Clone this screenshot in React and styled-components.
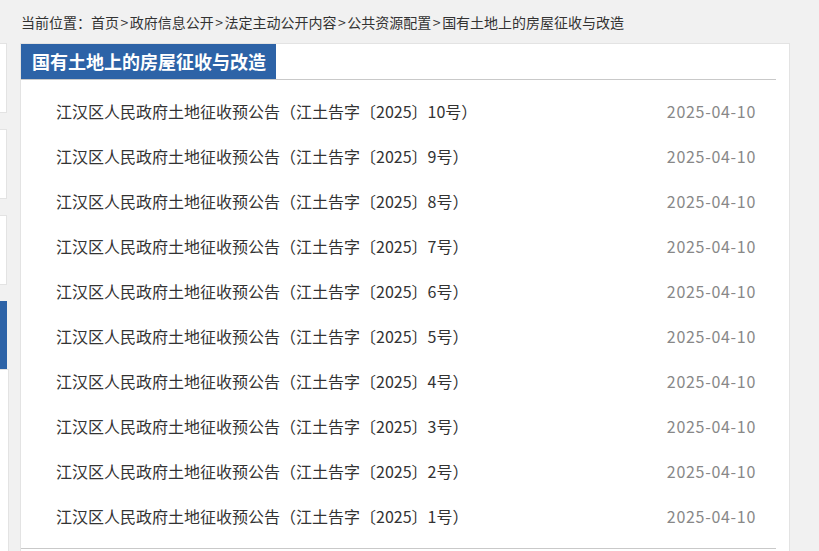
import React from 'react'
import styled, { createGlobalStyle } from 'styled-components'

const GlobalStyle = createGlobalStyle`
  html, body {
    margin: 0;
    padding: 0;
    background: #f1f1f1;
    font-family: "Microsoft YaHei", "Noto Sans CJK SC", "Noto Sans", sans-serif;
    overflow: hidden;
  }
`

const crumbs = ['首页', '政府信息公开', '法定主动公开内容', '公共资源配置', '国有土地上的房屋征收与改造']

const items = [10, 9, 8, 7, 6, 5, 4, 3, 2, 1].map(n => ({
    title: `江汉区人民政府土地征收预公告（江土告字〔2025〕${n}号）`,
    date: '2025-04-10',
}))

const sideItems = [false, false, false, true]

export default function App() {
    return (
        <Page>
            <GlobalStyle />
            <Crumb>
                当前位置：
                {crumbs.map((c, i) => (
                    <React.Fragment key={i}>
                        {i > 0 && <Sep>&gt;</Sep>}
                        {c}
                    </React.Fragment>
                ))}
            </Crumb>
            <Main>
                <Side>
                    {sideItems.map((on, i) => <SideItem key={i} $active={on} />)}
                    <SubMenu />
                </Side>
                <Panel>
                    <Head>
                        <HeadTitle>国有土地上的房屋征收与改造</HeadTitle>
                    </Head>
                    <List>
                        {items.map((it, i) => (
                            <Row key={i}>
                                <Title>{it.title}</Title>
                                <Date>{it.date}</Date>
                            </Row>
                        ))}
                    </List>
                </Panel>
            </Main>
        </Page>
    )
}

const Page = styled.div`
    width: 819px;
    height: 551px;
    overflow: hidden;
`

const Crumb = styled.div`
    height: 43px;
    line-height: 45px;
    padding-left: 21px;
    font-size: 14px;
    color: #333;
    white-space: nowrap;
`

const Sep = styled.span`
    padding: 0 1.5px;
`

const Main = styled.div`
    display: flex;
    align-items: flex-start;
`

const Side = styled.div`
    width: 7px;
    margin-right: 13px;
    display: flex;
    flex-direction: column;
`

const SideItem = styled.div`
    margin-bottom: ${p => (p.$active ? '0' : '16px')};
    background: ${p => (p.$active ? '#2d63a7' : '#fff')};
    border: 1px solid ${p => (p.$active ? '#2d63a7' : '#e3e3e3')};
    border-left: none;
    box-sizing: border-box;
    height: ${p => (p.$active ? '68px' : '70px')};
`

const SubMenu = styled.div`
    width: 9px;
    height: 300px;
    background: #fff;
    border: 1px solid #e3e3e3;
    border-left: none;
    box-sizing: border-box;
`

const Panel = styled.div`
    width: 770px;
    height: 600px;
    box-sizing: border-box;
    background: #fff;
    border: 1px solid #e3e3e3;
    padding-right: 13px;
`

const Head = styled.div`
    border-bottom: 1px solid #c9c9c9;
    height: 35px;
`

const HeadTitle = styled.div`
    display: inline-block;
    height: 35px;
    line-height: 35px;
    padding: 0 10px 0 11px;
    background: #2d63a7;
    color: #fff;
    font-size: 18px;
    font-weight: bold;
`

const List = styled.ul`
    list-style: none;
    margin: 0;
    padding: 8px 0 10px;
    border-bottom: 1px solid #c9c9c9;
`

const Row = styled.li`
    display: flex;
    justify-content: space-between;
    align-items: center;
    height: 45px;
    padding: 0 20px 0 35px;
    font-size: 16px;
`

const Title = styled.span`
    color: #333;
`

const Date = styled.span`
    color: #888;
    letter-spacing: 0.7px;
`
